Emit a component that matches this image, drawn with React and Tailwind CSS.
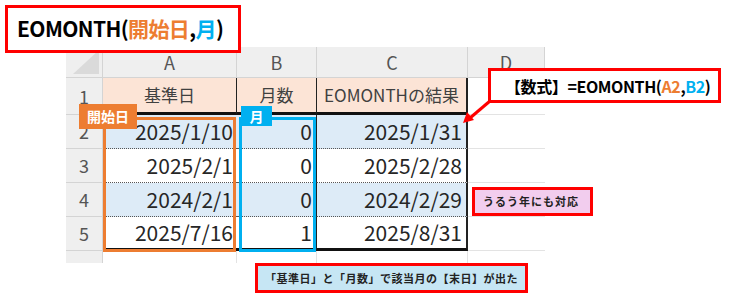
import React from "react";

const jp = { fontFamily: '"Noto Sans CJK JP", "Noto Sans", sans-serif' };

// column widths: row header, A, B, C, D
const cols = "grid-cols-[37px_134px_80px_151px_77px]";

const rows = [
  { n: 2, a: "2025/1/10", b: "0", c: "2025/1/31", blue: true },
  { n: 3, a: "2025/2/1", b: "0", c: "2025/2/28", blue: false },
  { n: 4, a: "2024/2/1", b: "0", c: "2024/2/29", blue: true },
  { n: 5, a: "2025/7/16", b: "1", c: "2025/8/31", blue: false },
];

function RowHead({ children, h }) {
  return (
    <div className={`${h} flex items-center justify-center bg-[#efefef] border-r border-b border-[#d4d4d4] text-[18px] text-[#555]`}>
      {children}
    </div>
  );
}

export default function App() {
  return (
    <div className="relative w-[729px] h-[298px] bg-white overflow-hidden" style={jp}>
      {/* sheet */}
      <div className="pl-[66px] pt-[47px]">
        <div className={`grid ${cols} w-[479px]`}>
          {/* column header row */}
          <div className="h-[31px] bg-[#efefef] border-r border-b border-[#d4d4d4] relative">
            <svg className="absolute right-[3px] bottom-[3px]" width="26" height="24" viewBox="0 0 26 24">
              <polygon points="26,0 26,24 0,24" fill="#dadada" />
            </svg>
          </div>
          {["A", "B", "C", "D"].map((c) => (
            <div key={c} className="h-[31px] flex items-center justify-center bg-[#efefef] border-r border-b border-[#d4d4d4] text-[18px] text-[#555]">
              {c}
            </div>
          ))}

          {/* row 1 */}
          <RowHead h="h-[37px]">1</RowHead>
          <div className="h-[37px] flex items-center justify-center bg-[#fce4d6] border-r border-[#222] border-b-[3px] border-b-[#111] text-[17px] text-[#404040]">基準日</div>
          <div className="h-[37px] flex items-center justify-center bg-[#fce4d6] border-r border-[#222] border-b-[3px] border-b-[#111] text-[17px] text-[#404040]">月数</div>
          <div className="h-[37px] flex items-center justify-center bg-[#fce4d6] border-r-2 border-[#222] border-b-[3px] border-b-[#111] text-[17px] text-[#404040]">EOMONTHの結果</div>
          <div className="h-[37px] border-b border-[#e3e3e3]" />

          {rows.map((r, i) => {
            const last = i === rows.length - 1;
            const bb = last ? "border-b-[3px] border-b-[#111]" : "border-b [border-bottom-style:dotted] border-b-[#555]";
            const bg = r.blue ? "bg-[#ddebf7]" : "bg-white";
            return (
              <React.Fragment key={r.n}>
                <RowHead h="h-[34px]">{r.n}</RowHead>
                <div className={`h-[34px] flex items-center justify-end pr-[4px] ${bg} ${bb} text-[21px] text-[#262626]`}>{r.a}</div>
                <div className={`h-[34px] flex items-center justify-end pr-[4px] ${bg} border-r border-r-[#222] ${bb} text-[21px] text-[#262626]`}>{r.b}</div>
                <div className={`h-[34px] flex items-center justify-end pr-[4px] ${bg} border-r-2 border-r-[#222] ${bb} text-[21px] text-[#262626]`}>{r.c}</div>
                <div className="h-[34px] border-b border-[#e3e3e3]" />
              </React.Fragment>
            );
          })}

          {/* row 6 (partial) */}
          <div className="h-[12px] bg-[#efefef] border-r border-[#d4d4d4]" />
          <div className="h-[12px] border-r border-[#e3e3e3]" />
          <div className="h-[12px] border-r border-[#e3e3e3]" />
          <div className="h-[12px] border-r border-[#e3e3e3]" />
          <div className="h-[12px]" />
        </div>
      </div>

      {/* title callout */}
      <div className="absolute left-[5px] top-[5px] w-[236px] h-[48px] bg-white border-[3px] border-[#ff0000] flex items-center pl-[9px] text-[21px] font-bold text-black">
        <span className="whitespace-nowrap tracking-[-0.6px]">
          EOMONTH(<span className="text-[#ed7d31]">開始日</span>,<span className="text-[#00b0f0]">月</span>)
        </span>
      </div>

      {/* range highlights */}
      <div className="absolute left-[103px] top-[117px] w-[133px] h-[135px] border-[3px] border-[#ed7d31]" />
      <div className="absolute left-[79px] top-[104px] w-[58px] h-[25px] bg-[#ed7d31] text-white text-[14px] font-bold flex items-center justify-center">開始日</div>
      <div className="absolute left-[239px] top-[117px] w-[77px] h-[135px] border-[3px] border-[#00b0f0]" />
      <div className="absolute left-[241px] top-[106px] w-[31px] h-[20px] bg-[#00b0f0] text-white text-[14px] font-bold flex items-center justify-center">月</div>

      {/* formula callout */}
      <svg className="absolute left-0 top-0" width="729" height="298">
        <line x1="490" y1="101" x2="470" y2="118" stroke="#ff0000" strokeWidth="3" />
        <polygon points="463,123 467,112 474,120" fill="#ff0000" />
      </svg>
      <div className="absolute left-[488px] top-[68px] w-[233px] h-[35px] bg-white border-[3px] border-[#ff0000] flex items-center pl-[14px] text-[16px] font-bold text-black">
        <span className="whitespace-nowrap tracking-[-0.4px]">
          【数式】=EOMONTH(<span className="text-[#ed7d31]">A2</span>,<span className="text-[#00b0f0]">B2</span>)
        </span>
      </div>

      {/* leap year note */}
      <div className="absolute left-[472px] top-[187px] w-[121px] h-[29px] bg-[#f2cdee] border-[3px] border-[#ff0000] flex items-center pl-[8px] text-[11px] font-bold text-[#222] tracking-[1px]">
        うるう年にも対応
      </div>

      {/* bottom note */}
      <div className="absolute left-[255px] top-[263px] w-[273px] h-[30px] bg-[#c6e6f4] border-[3px] border-[#ff0000] flex items-center justify-center text-[11px] font-bold text-[#222] tracking-[0.5px]">
        「基準日」と「月数」で該当月の【末日】が出た
      </div>
    </div>
  );
}
